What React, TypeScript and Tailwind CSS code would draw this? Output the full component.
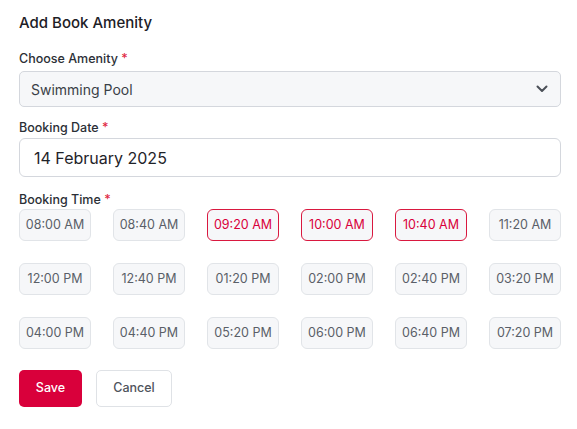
import React from "react";

const times = [
  "08:00 AM", "08:40 AM", "09:20 AM", "10:00 AM", "10:40 AM", "11:20 AM",
  "12:00 PM", "12:40 PM", "01:20 PM", "02:00 PM", "02:40 PM", "03:20 PM",
  "04:00 PM", "04:40 PM", "05:20 PM", "06:00 PM", "06:40 PM", "07:20 PM",
];
const selected = new Set(["09:20 AM", "10:00 AM", "10:40 AM"]);

function Label({ children }: { children: React.ReactNode }) {
  return (
    <div className="text-[12.5px] leading-[16px] font-medium text-[#2b2f36]">
      {children} <span className="text-[#e0263f]">*</span>
    </div>
  );
}

export default function App() {
  return (
    <div
      className="w-[577px] h-[429px] bg-white pl-[19px] pt-[13px]"
      style={{ fontFamily: "Inter, 'Noto Sans', sans-serif" }}
    >
      <div className="w-[542px]">
        <h1 className="text-[15px] leading-[20px] font-medium text-[#1d2026]">Add Book Amenity</h1>

        <div className="mt-[18px]">
          <Label>Choose Amenity</Label>
          <div className="mt-[4px] h-[36px] rounded-[5px] border border-[#d4d7dd] bg-[#f6f7f9] flex items-center justify-between pl-[11px] pr-[12px]">
            <span className="text-[14px] text-[#3a3f47]">Swimming Pool</span>
            <svg width="12" height="8" viewBox="0 0 12 8" fill="none">
              <path d="M1.5 1.5 L6 6 L10.5 1.5" stroke="#4b5058" strokeWidth="2" strokeLinecap="round" strokeLinejoin="round" />
            </svg>
          </div>
        </div>

        <div className="mt-[13px]">
          <Label>Booking Date</Label>
          <div className="mt-[2px] h-[39px] rounded-[6px] border border-[#d4d7dd] bg-white flex items-center pl-[14px]">
            <span className="text-[16px] text-[#1f2329]">14 February 2025</span>
          </div>
        </div>

        <div className="mt-[15px]">
          <Label>Booking Time</Label>
          <div className="mt-[1px] grid grid-cols-[repeat(6,72px)] justify-between gap-y-[22px]">
            {times.map((t) => {
              const sel = selected.has(t);
              return (
                <div
                  key={t}
                  className={
                    "h-[32px] rounded-[6px] border bg-[#f6f7f9] flex items-center justify-center text-[12.5px] " +
                    (sel ? "border-[#d9183f] text-[#d9003b]" : "border-[#e1e4e8] text-[#5a5f68]")
                  }
                >
                  {t}
                </div>
              );
            })}
          </div>
        </div>

        <div className="mt-[21px] flex gap-[14px]">
          <button className="h-[37px] w-[63px] rounded-[5px] bg-[#d9003b] text-white text-[12.5px] font-medium">
            Save
          </button>
          <button className="h-[37px] w-[76px] rounded-[5px] border border-[#dfe2e6] bg-white text-[#4f545c] text-[12.5px] font-medium">
            Cancel
          </button>
        </div>
      </div>
    </div>
  );
}
